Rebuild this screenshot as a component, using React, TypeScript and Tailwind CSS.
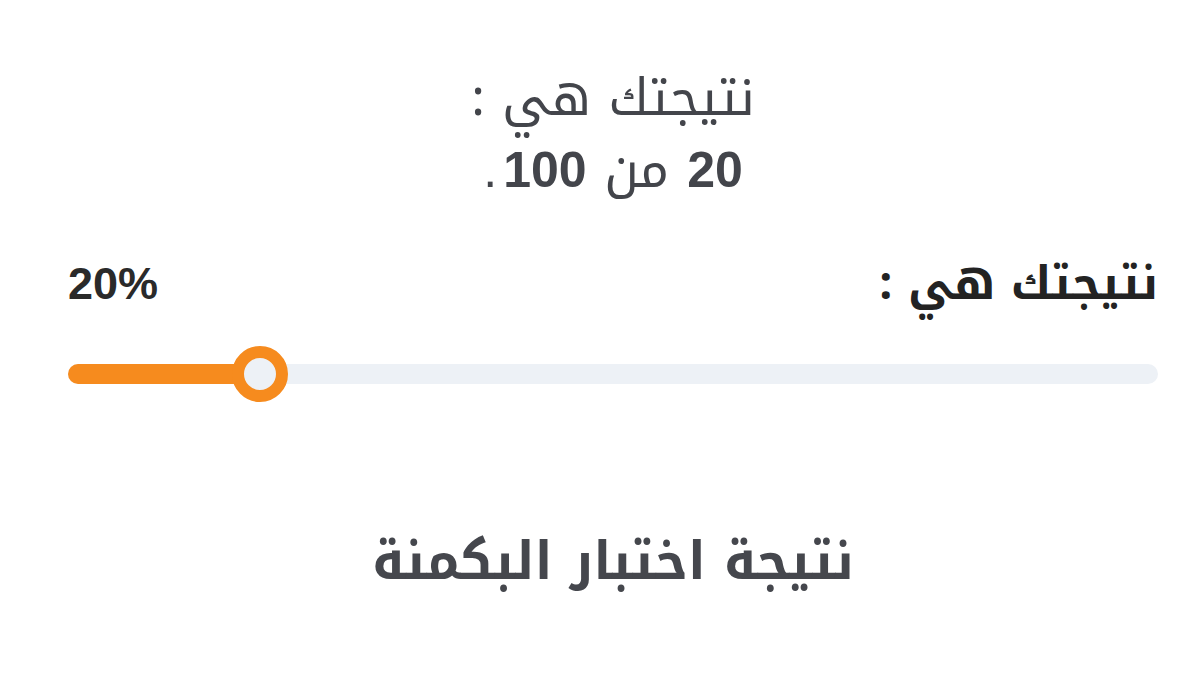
export default function App() {
  const pct = 17.6;
  const ar = { fontFamily: '"Noto Kufi Arabic", "Noto Sans Arabic", sans-serif' };
  const lat = { fontFamily: '"Liberation Sans", Arial, sans-serif' };
  return (
    <div dir="rtl" className="w-[1200px] h-[675px] bg-white flex flex-col items-center pl-[26px]" style={ar}>
      <div className="mt-[62px] flex flex-col items-center text-[#43454b]">
        <div className="text-[51px] leading-[72px]">نتيجتك هي :</div>
        <div dir="ltr" className="text-[51px] leading-[72px] flex flex-row items-baseline">
          <span className="text-[50px] mr-[6px]" style={lat}>.</span>
          <span className="font-bold text-[50px]" style={lat}>100</span>
          <span className="mx-[18px]">من</span>
          <span className="font-bold text-[50px]" style={lat}>20</span>
        </div>
      </div>
      <div className="w-[1090px] mt-[44px] flex flex-row justify-between items-center">
        <div className="text-[46px] font-bold text-[#232323] leading-[60px]">نتيجتك هي :</div>
        <div dir="ltr" className="text-[45px] font-bold text-[#2a2a2a]" style={lat}>20%</div>
      </div>
      <div dir="ltr" className="w-[1090px] mt-[28px] relative h-[56px] flex items-center">
        <div className="w-full h-[20px] rounded-full bg-[#edf1f6]">
          <div className="h-full rounded-full bg-[#f68b1e]" style={{ width: `${pct}%` }} />
        </div>
        <div
          className="absolute top-0 w-[56px] h-[56px] rounded-full border-[12px] border-[#f68b1e] bg-[#edf1f6]"
          style={{ left: `calc(${pct}% - 28px)` }}
        />
      </div>
      <div className="mt-[124px] text-[52px] font-bold text-[#45474d] leading-[72px]">نتيجة اختبار البكمنة</div>
    </div>
  );
}
